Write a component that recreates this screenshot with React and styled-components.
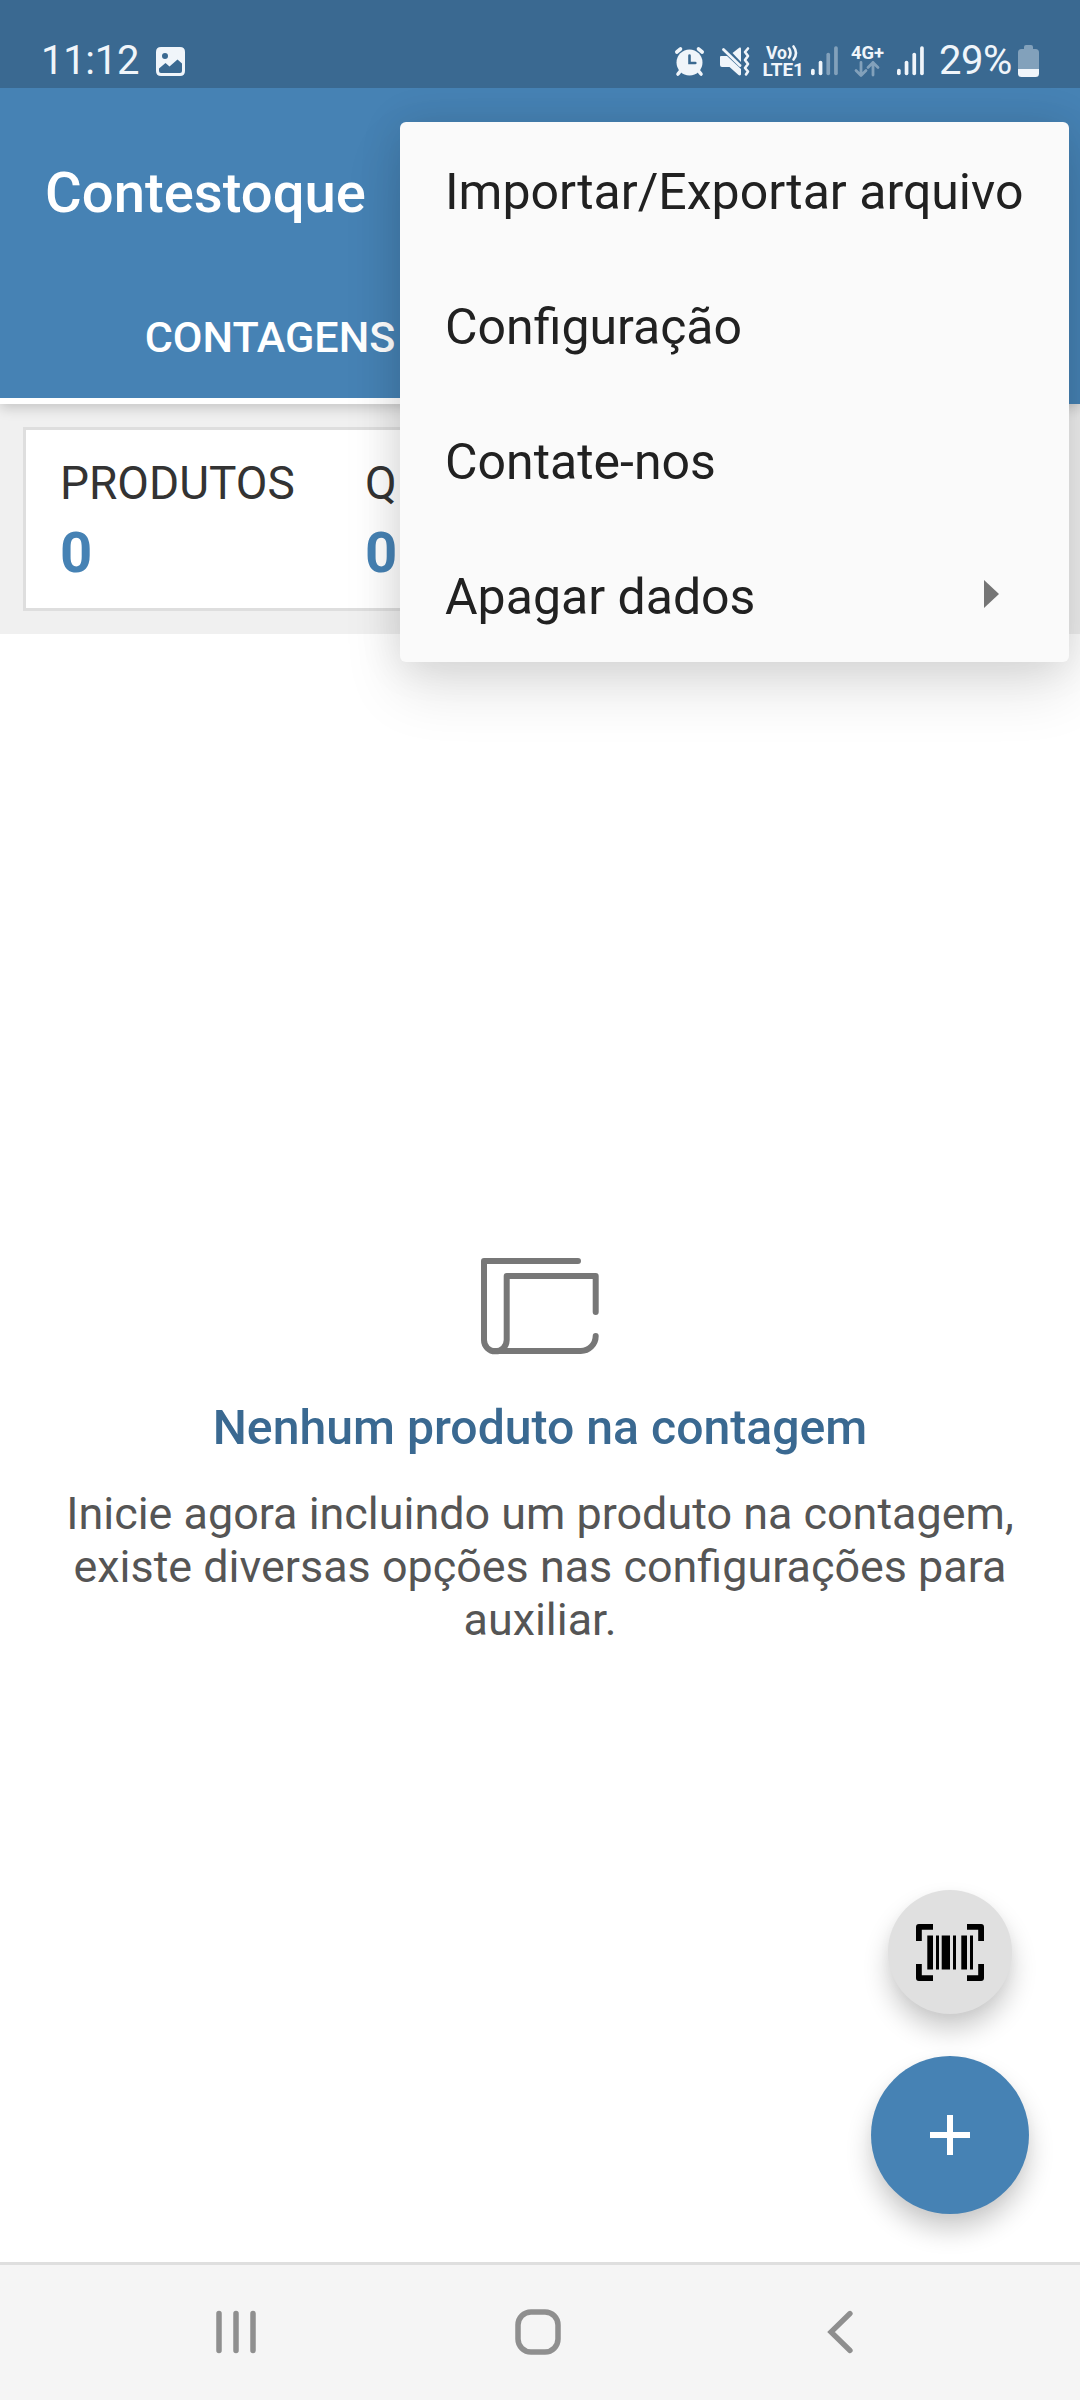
import React from "react";
import styled, { createGlobalStyle } from "styled-components";

const GlobalStyle = createGlobalStyle`
  *, *::before, *::after { box-sizing: border-box; }
  body { margin: 0; background: #fff; font-family: Roboto, "Noto Sans", sans-serif; }
  svg { display: block; flex: none; }
`;

const Screen = styled.div`
  position: relative;
  display: flex;
  flex-direction: column;
  width: 1080px;
  height: 2400px;
  overflow: hidden;
  background: #fff;
`;

const StatusBar = styled.div`
  position: relative;
  z-index: 3;
  display: flex;
  justify-content: space-between;
  height: 88px;
  padding: 32px 41px 0 41px;
  background: #3a6991;
  color: #f0f5fa;
  flex: none;
`;

const StatusGroup = styled.div`
  display: flex;
  align-items: center;
  height: 58px;
`;

const StatusText = styled.span`
  font-size: 40px;
  line-height: 56px;
  letter-spacing: ${(p) => p.$spacing || 0};
  width: ${(p) => p.$width};
  margin-right: ${(p) => p.$gap || 0};
  white-space: nowrap;
`;

const StatusIcon = styled.svg`
  margin-right: ${(p) => p.$gap || 0};
  overflow: visible;
  text {
    font-family: Roboto, sans-serif;
    font-weight: 700;
    fill: #f0f5fa;
  }
`;

const AppBar = styled.header`
  position: relative;
  z-index: 1;
  display: flex;
  flex-direction: column;
  justify-content: space-between;
  height: 316px;
  background: #4682b4;
  color: #fff;
  box-shadow: 0 4px 12px rgba(0, 0, 0, 0.18);
  flex: none;
`;

const AppTitle = styled.h1`
  margin: 0;
  padding: 72px 0 0 45px;
  font-size: 56.25px;
  line-height: 66px;
  font-weight: 500;
`;

const Tabs = styled.nav`
  display: grid;
  grid-template-columns: 1fr 1fr;
  height: 135px;
`;

const Tab = styled.div`
  display: flex;
  align-items: center;
  justify-content: center;
  padding-top: 8px;
  border-bottom: 6px solid ${(p) => (p.$active ? "#fff" : "transparent")};
  font-size: 43.1px;
  font-weight: 500;
`;

const Summary = styled.section`
  height: 230px;
  padding: 23px;
  background: #f0f0f0;
  flex: none;
`;

const SummaryCard = styled.div`
  display: flex;
  height: 184px;
  padding: 27px 34px;
  background: #fff;
  border: 3px solid #dedede;
`;

const Stat = styled.div`
  display: flex;
  flex-direction: column;
  width: 305px;
`;

const StatLabel = styled.span`
  font-size: 46px;
  line-height: 53px;
  color: #333;
`;

const StatValue = styled.span`
  margin-top: 10px;
  font-size: 56.25px;
  line-height: 66px;
  font-weight: 700;
  color: #4682b4;
`;

const EmptyState = styled.main`
  flex: 1;
  display: flex;
  flex-direction: column;
  align-items: center;
  padding: 623px 60px 0;
  text-align: center;
`;

const EmptyTitle = styled.h2`
  margin: 44px 0 0;
  font-size: 48.15px;
  line-height: 58px;
  font-weight: 500;
  color: #3a6991;
`;

const EmptyText = styled.p`
  margin: 30px 0 0;
  font-size: 44.9px;
  line-height: 53px;
  color: #555;
`;

const FabStack = styled.div`
  position: absolute;
  right: 51px;
  bottom: 186px;
  display: flex;
  flex-direction: column;
  align-items: center;
  gap: 42px;
`;

const Fab = styled.button`
  display: flex;
  align-items: center;
  justify-content: center;
  width: ${(p) => p.$size}px;
  height: ${(p) => p.$size}px;
  padding: 0;
  border: 0;
  border-radius: 50%;
  background: ${(p) => p.$color};
  box-shadow: 0 16px 26px rgba(0, 0, 0, 0.2), 0 3px 12px rgba(0, 0, 0, 0.03);
`;

const SystemNav = styled.footer`
  display: grid;
  grid-template-columns: repeat(3, 302px);
  place-items: center;
  height: 138px;
  padding: 0 0 1px 85px;
  border-top: 3px solid #dfdfdf;
  background: #f5f5f5;
  flex: none;
`;

const Menu = styled.ul`
  position: absolute;
  z-index: 2;
  top: 122px;
  left: 400px;
  width: 669px;
  margin: 0;
  padding: 0;
  list-style: none;
  border-radius: 6px;
  background: #fafafa;
  box-shadow: 0 28px 60px rgba(0, 0, 0, 0.11), 0 2px 44px rgba(0, 0, 0, 0.11);
`;

const MenuItem = styled.li`
  display: flex;
  align-items: center;
  justify-content: space-between;
  height: 135px;
  padding: 4px 70px 0 45px;
  font-size: 50px;
  line-height: 60px;
  color: #212121;
  white-space: nowrap;
`;

const SubmenuArrow = styled.svg`
  margin-bottom: 5px;
`;

const PictureIcon = () => (
  <StatusIcon width="29" height="29" viewBox="0 0 29 29">
    <path
      fill="#f0f5fa"
      fillRule="evenodd"
      d="M5 0H24Q29 0 29 5V24Q29 29 24 29H5Q0 29 0 24V5Q0 0 5 0ZM9 6A3 3 0 1 0 9 12A3 3 0 1 0 9 6ZM3 21.5V24Q3 26 5 26H24Q26 26 26 24V16.500L21.500 12.500L13.500 19.500L9.500 16Z"
    />
  </StatusIcon>
);

const AlarmIcon = () => (
  <StatusIcon $gap="16px" width="29" height="29" viewBox="0 0 29 29" fill="none" stroke="#f0f5fa" strokeLinecap="round">
    <circle cx="14.5" cy="15.500" r="13" fill="#f0f5fa" stroke="none" />
    <path strokeWidth="3.600" d="M1.800 5L5.500 2M27.200 5L23.500 2M5 24.500L3 27M24 24.500L26 27" />
    <path stroke="#3a6991" strokeWidth="2.600" d="M14.500 8.500V16H20.300" />
  </StatusIcon>
);

const MuteIcon = () => (
  <StatusIcon $gap="14px" width="29" height="29" viewBox="0 0 29 29">
    <path fill="#f0f5fa" d="M0 10Q0 9 1 9H7L21 22V27.500Q20 29 18.500 28L9.500 20H2Q0 20 0 18Z" />
    <path fill="#f0f5fa" d="M12.500 6L19.500 0.500Q21 0 21 1.500V15Z" />
    <path d="M3.500 2.500L20 18.500" stroke="#f0f5fa" strokeWidth="2.800" strokeLinecap="round" />
    <path
      d="M28 1.500L25 5L28 9L25 13L28 17L25 21L28 24.500L26 27.500"
      fill="none"
      stroke="#f0f5fa"
      strokeWidth="2.600"
      strokeLinecap="round"
      strokeLinejoin="round"
    />
  </StatusIcon>
);

const VolteIcon = () => (
  <StatusIcon $gap="10px" width="38" height="32" viewBox="0 0 38 32">
    <text x="3" y="13.500" fontSize="18" textLength="21" lengthAdjust="spacingAndGlyphs">Vo</text>
    <path
      d="M26 3.500Q29 8 26 12.500M30.500 1.500Q35.500 8 30.500 14.500"
      fill="none"
      stroke="#f0f5fa"
      strokeWidth="2.600"
      strokeLinecap="round"
    />
    <text x="-0.5" y="31" fontSize="18.500" textLength="41.500" lengthAdjust="spacingAndGlyphs">LTE1</text>
  </StatusIcon>
);

const SignalIcon = ({ level, gap }) => (
  <StatusIcon $gap={gap} width="27" height="30" viewBox="0 0 27 30">
    {[6.500, 14.500, 22.500, 29].map((h, i) => (
      <rect
        key={i}
        x={i * 7.700}
        y={29.300 - h}
        width="3.700"
        height={h}
        rx="1.800"
        fill="#f0f5fa"
        opacity={i < level ? 1 : 0.4}
      />
    ))}
  </StatusIcon>
);

const DataIcon = () => (
  <StatusIcon $gap="13px" width="33" height="32" viewBox="0 0 33 32">
    <text x="0" y="13.500" fontSize="19" textLength="33" lengthAdjust="spacingAndGlyphs">4G+</text>
    <path
      d="M10 17.500V30M5 25.500L10 30.500L15 25.500M22 30V17.500M17 22.500L22 17.500L27 22.500"
      fill="none"
      stroke="#f0f5fa"
      strokeOpacity="0.4"
      strokeWidth="2.800"
      strokeLinecap="round"
      strokeLinejoin="round"
    />
  </StatusIcon>
);

const BatteryIcon = () => (
  <StatusIcon width="21" height="32" viewBox="0 0 21 32">
    <path
      fill="#f0f5fa"
      opacity="0.4"
      d="M6 4V2Q6 0 8 0H13Q15 0 15 2V4H17.500Q21 4 21 7.500V24H0V7.500Q0 4 3.500 4Z"
    />
    <path fill="#f0f5fa" d="M0 24H21V28.500Q21 32 17.500 32H3.500Q0 32 0 28.500Z" />
  </StatusIcon>
);

const PagesIcon = () => (
  <svg
    width="118"
    height="98"
    viewBox="21 27 118 98"
    fill="none"
    stroke="#777"
    strokeWidth="6"
    strokeLinecap="round"
    strokeLinejoin="round"
  >
    <path d="M118 31H24V110A11.350 11.350 0 0 0 46.700 110V46H135.700V82" />
    <path d="M35.300 121H120.500A15 15 0 0 0 135.700 106" />
  </svg>
);

const BarcodeIcon = () => (
  <svg width="68" height="57" viewBox="0 0 68 57">
    <path
      fill="none"
      stroke="#000"
      strokeWidth="5.800"
      strokeLinejoin="round"
      d="M17 2.900H2.900V17M51 2.900H65.100V17M2.900 40V54.100H17M65.100 40V54.100H51"
    />
    <path d="M11.300 11.500h5.700v34h-5.700zM20 11.500h3v34h-3zM25.700 11.500h8.300v34h-8.300zM37 11.500h3v34h-3zM45.300 11.500h5.700v34h-5.700zM54 11.500h3v34h-3z" />
  </svg>
);

export default function App() {
  return (
    <>
      <GlobalStyle />
      <Screen>
        <StatusBar>
          <StatusGroup>
            <StatusText $width="115px" $spacing="-0.3px">11:12</StatusText>
            <PictureIcon />
          </StatusGroup>
          <StatusGroup>
            <AlarmIcon />
            <MuteIcon />
            <VolteIcon />
            <SignalIcon level={2} gap="13px" />
            <DataIcon />
            <SignalIcon level={4} gap="15px" />
            <StatusText $width="74px" $gap="5px" $spacing="-0.5px">29%</StatusText>
            <BatteryIcon />
          </StatusGroup>
        </StatusBar>

        <AppBar>
          <AppTitle>Contestoque</AppTitle>
          <Tabs>
            <Tab $active>CONTAGENS</Tab>
            <Tab />
          </Tabs>
        </AppBar>

        <Summary>
          <SummaryCard>
            <Stat>
              <StatLabel>PRODUTOS</StatLabel>
              <StatValue>0</StatValue>
            </Stat>
            <Stat>
              <StatLabel>Q</StatLabel>
              <StatValue>0</StatValue>
            </Stat>
          </SummaryCard>
        </Summary>

        <EmptyState>
          <PagesIcon />
          <EmptyTitle>Nenhum produto na contagem</EmptyTitle>
          <EmptyText>
            Inicie agora incluindo um produto na contagem, existe diversas opções nas configurações para auxiliar.
          </EmptyText>
        </EmptyState>

        <SystemNav>
          <svg width="40" height="44" viewBox="0 0 40 44" stroke="#8f8f8f" strokeWidth="5.500" strokeLinecap="round">
            <path d="M3 3.500V40.500M20 3.500V40.500M37 3.500V40.500" />
          </svg>
          <svg width="46" height="46" viewBox="0 0 46 46" fill="none" stroke="#8f8f8f" strokeWidth="5.500">
            <rect x="3" y="3" width="40" height="40" rx="13" />
          </svg>
          <svg
            width="26"
            height="44"
            viewBox="0 0 26 44"
            fill="none"
            stroke="#8f8f8f"
            strokeWidth="5.300"
            strokeLinecap="round"
          >
            <path d="M23 3.500L4 22L23 40.500" />
          </svg>
        </SystemNav>

        <FabStack>
          <Fab $size={124} $color="#e0e0e0">
            <BarcodeIcon />
          </Fab>
          <Fab $size={158} $color="#4682b4">
            <svg width="40" height="40" viewBox="0 0 40 40" fill="#fff">
              <path d="M17 0h6v17h17v6H23v17h-6V23H0v-6h17z" />
            </svg>
          </Fab>
        </FabStack>

        <Menu>
          <MenuItem>Importar/Exportar arquivo</MenuItem>
          <MenuItem>Configuração</MenuItem>
          <MenuItem>Contate-nos</MenuItem>
          <MenuItem>
            Apagar dados
            <SubmenuArrow width="15" height="28" viewBox="0 0 15 28">
              <path d="M0 0L15 14L0 28Z" fill="#757575" />
            </SubmenuArrow>
          </MenuItem>
        </Menu>
      </Screen>
    </>
  );
}
